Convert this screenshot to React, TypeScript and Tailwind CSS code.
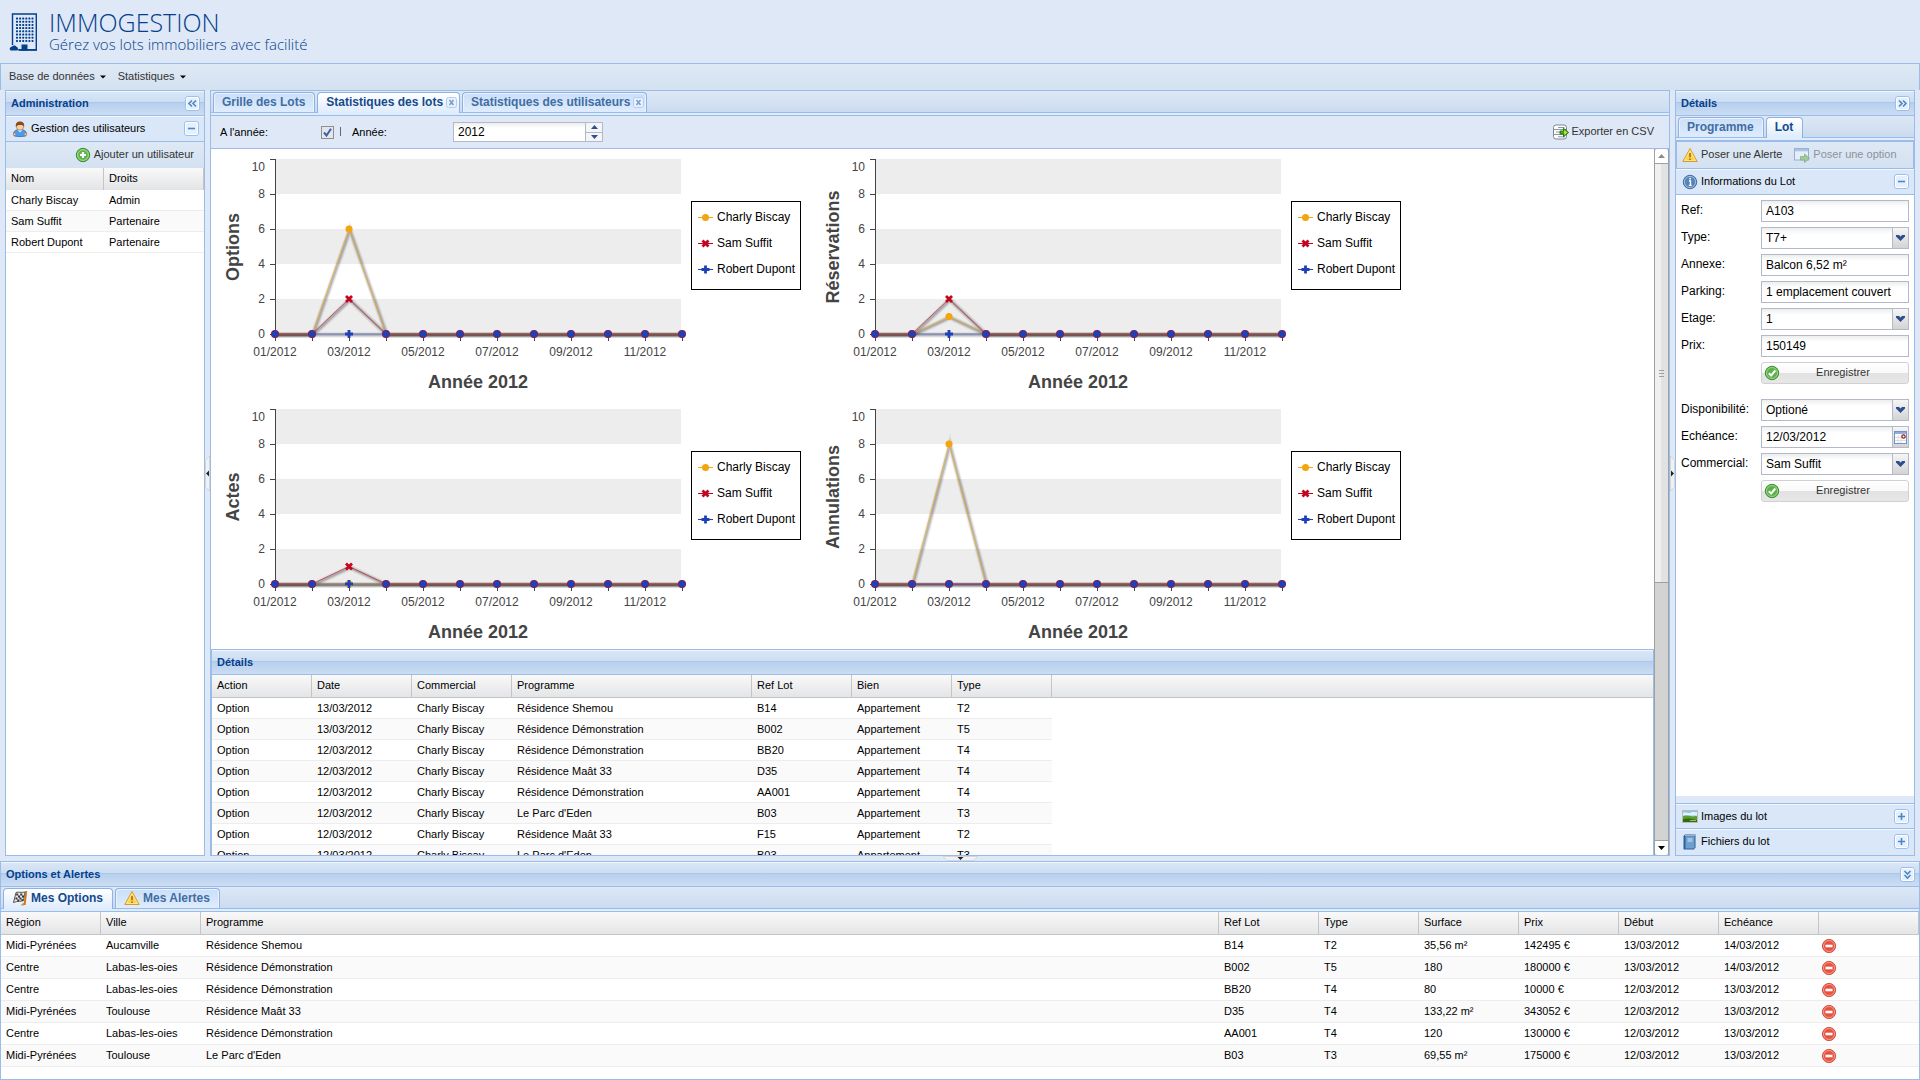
import { useState } from 'react';
import type { ReactNode } from 'react';

const HEADER_BG =
  'bg-[linear-gradient(to_bottom,#dae7f6_0%,#cddef3_45%,#abc7ec_46%,#abc7ec_50%,#b8cfee_51%,#cbddf3_100%)]';
const TOOLBAR_BG = 'bg-gradient-to-b from-[#dfe9f5] to-[#d3e1f1]';
const GRID_HEAD_BG = 'bg-gradient-to-b from-[#f9f9f9] to-[#e3e4e6]';

type ToolType = 'left' | 'right' | 'down' | 'minus' | 'plus';

const toolPaths: Record<ToolType, string> = {
  left: 'M7 4.5L4 7.5L7 10.5M11 4.5L8 7.5L11 10.5',
  right: 'M4 4.5L7 7.5L4 10.5M8 4.5L11 7.5L8 10.5',
  down: 'M4.5 4L7.5 7L10.5 4M4.5 8L7.5 11L10.5 8',
  minus: 'M4 7.5H11',
  plus: 'M4 7.5H11M7.5 4V11',
};

/** パネル右上のツールボタン */
function Tool({ type, label }: { type: ToolType; label: string }) {
  return (
    <button type="button" aria-label={label} className="ml-auto block size-[15px] shrink-0">
      <svg width="15" height="15" viewBox="0 0 15 15">
        <rect x="0.5" y="0.5" width="14" height="14" rx="2.5" fill="#e4f0fd" stroke="#9cbfee" />
        <rect x="1.5" y="1.5" width="12" height="12" rx="1.5" fill="none" stroke="#fff" />
        <path d={toolPaths[type]} fill="none" stroke="#4d86c2" strokeWidth="1.6" />
      </svg>
    </button>
  );
}

function UserIcon() {
  return (
    <svg width="16" height="16" viewBox="0 0 16 16">
      <path d="M1.5 13.5C1.5 10 4 8.5 8 8.5s6.500 1.500 6.500 5C14.500 15.200 12 15.500 8 15.500s-6.500-.3-6.500-2z" fill="#4d9be8" stroke="#2a66b4" strokeWidth=".8" />
      <path d="M5.500 9L8 11.500L10.500 9z" fill="#d8ecff" />
      <circle cx="2.500" cy="13.300" r="1.300" fill="#f2c08c" stroke="#b0703c" strokeWidth=".5" />
      <circle cx="13.500" cy="13.300" r="1.300" fill="#f2c08c" stroke="#b0703c" strokeWidth=".5" />
      <circle cx="8" cy="5.500" r="3.700" fill="#f6cfa2" stroke="#a8683a" strokeWidth=".6" />
      <path d="M4 6C3 2 5.500.5 8 .5S13 2 12 6C11.500 4.500 10.500 4 8.500 4S5 4.300 4 6z" fill="#8a4a1c" />
    </svg>
  );
}

function AddIcon() {
  return (
    <svg width="16" height="16" viewBox="0 0 16 16">
      <circle cx="8" cy="8" r="6.700" fill="#5fb54a" stroke="#3c8a32" />
      <circle cx="8" cy="8" r="5.400" fill="none" stroke="#b4e0a4" strokeWidth=".9" />
      <path d="M8 5V11M5 8H11" stroke="#fff" strokeWidth="2.200" />
    </svg>
  );
}

function AcceptIcon() {
  return (
    <svg width="16" height="16" viewBox="0 0 16 16">
      <circle cx="8" cy="8" r="6.700" fill="#58b244" stroke="#3f8c36" />
      <circle cx="8" cy="8" r="5.500" fill="none" stroke="#a6d998" strokeWidth=".9" />
      <path d="M4.800 8.200L7.200 10.500L11.300 5.500" fill="none" stroke="#fff" strokeWidth="2" />
    </svg>
  );
}

function DeleteIcon() {
  return (
    <svg width="16" height="16" viewBox="0 0 16 16">
      <circle cx="8" cy="8" r="6.600" fill="#e9513f" stroke="#cf5647" />
      <circle cx="8" cy="8" r="5.500" fill="none" stroke="#f5a395" strokeWidth=".9" />
      <rect x="4.500" y="6.700" width="7" height="2.600" fill="#fff" />
    </svg>
  );
}

function WarningIcon() {
  return (
    <svg width="16" height="16" viewBox="0 0 16 16">
      <path d="M8 1.500L15.200 14.500H.8z" fill="#fbd24c" stroke="#dd9a2c" strokeLinejoin="round" />
      <path d="M8 3.700L13.400 13.500H2.600z" fill="none" stroke="#fdeeb0" strokeWidth=".7" />
      <path d="M8 6V10.300M8 11.500V13" stroke="#9c6a12" strokeWidth="1.500" />
    </svg>
  );
}

function OptionIcon() {
  return (
    <svg width="16" height="16" viewBox="0 0 16 16" opacity=".55">
      <rect x=".5" y="1.500" width="14" height="11.500" fill="#f2f6fb" stroke="#5f86bd" />
      <rect x="1" y="2" width="13" height="2.300" fill="#7ea6dc" />
      <path d="M6.500 9.500H10.500V7L15.500 11.300L10.500 15.500V13H6.500z" fill="#72b857" stroke="#3e8730" strokeWidth=".8" />
    </svg>
  );
}

function InfoIcon() {
  return (
    <svg width="16" height="16" viewBox="0 0 16 16">
      <circle cx="8" cy="8" r="6.700" fill="#5484ba" stroke="#3f6ea6" />
      <circle cx="8" cy="8" r="5.600" fill="none" stroke="#a9c6e4" strokeWidth=".9" />
      <path d="M7 7H8.500V11M6.800 11.400H9.600" stroke="#fff" strokeWidth="1.300" fill="none" />
      <rect x="7.300" y="3.900" width="1.600" height="1.600" fill="#fff" />
    </svg>
  );
}

function PictureIcon() {
  return (
    <svg width="16" height="16" viewBox="0 0 16 16">
      <rect x=".5" y="2.500" width="15" height="12" fill="#8fc4ee" stroke="#b5bdb5" />
      <path d="M1 5C4 3.500 6 6 9 4.500S13 5 15 4V7.500H1z" fill="#e2f1fb" />
      <path d="M1 8C4 7 7 7.500 10 8.500L15 8V14H1z" fill="#5f9e26" />
      <path d="M1 11C5 10 9 10.500 15 12V14H1z" fill="#2f6a14" />
      <path d="M8 12.500H14" stroke="#b8d49a" strokeWidth=".8" />
    </svg>
  );
}

function BookIcon() {
  return (
    <svg width="16" height="16" viewBox="0 0 16 16">
      <path d="M1.500 2L3 .5H13.500V13.500L12 15.500H1.500z" fill="#2f5f94" />
      <path d="M3.500 2.500H12.500V14.500H3.500z" fill="#6d9fd0" />
      <path d="M3 1.700H13" stroke="#dce8f3" strokeWidth=".8" />
      <path d="M5.500 5H10.500M5.500 7H10.500" stroke="#d4e6f6" />
    </svg>
  );
}

function ExportIcon() {
  return (
    <svg width="16" height="16" viewBox="0 0 16 16">
      <rect x=".5" y="1" width="13" height="14" rx="2.500" fill="#fff" stroke="#7d8790" />
      <path d="M.5 5.500H13M.5 10.500H13M5 3.500H11.500M3 8H9M5 12.800H12" stroke="#8c979f" />
      <path d="M7 7H10.500V4.300L15.600 8.500L10.500 12.800V10H7z" fill="#3fb21c" stroke="#14610c" strokeWidth=".8" />
      <path d="M11.300 6L14.300 8.500L11.300 11z" fill="#e8e02c" />
    </svg>
  );
}

function FlagIcon() {
  return (
    <svg width="16" height="16" viewBox="0 0 16 16">
      <path d="M4 2.500C6.500 1.500 9 3 13 2L11.500 10.500C9 12 6 10.500 1.500 12.500z" fill="#ececec" stroke="#444" strokeWidth=".9" />
      <path
        d="M4.200 3.500H6.200V5.500H4.200zM8.200 3.500H10.200V5.500H8.200zM6 5.500H8V7.500H6zM10 5.500H12V7.500H10zM3.500 7.500H5.500V9.500H3.500zM7.500 7.500H9.500V9.500H7.500zM5.300 9.500H7.300V11.200H5.300zM9.500 9.300H11.300V11H9.500z"
        fill="#333"
      />
      <path d="M14.200 1L12.600 15" stroke="#c97a1e" strokeWidth="2" />
      <path d="M9 14.800L12 12.500V15.500H9z" fill="#d9942f" />
    </svg>
  );
}

function BuildingLogo() {
  const rows = [0, 1, 2, 3, 4, 5, 6, 7];
  const cols = [0, 1, 2, 3, 4, 5];
  return (
    <svg width="30" height="38" viewBox="0 0 30 38">
      <path d="M3.500 32V1H27.300V37H10" fill="none" stroke="#04408c" strokeWidth="1.400" />
      {rows.map((r) =>
        cols.map((c) => (
          <rect key={`${r}-${c}`} x={7 + c * 3.1} y={4.5 + r * 3.2} width="2" height="2" rx=".6" fill="#04408c" />
        )),
      )}
      <path d="M1.500 37.500C0 36 .5 34 3 33.500C4 32 6.500 32 7.500 33.700C9 34 9.500 36 8.500 37.500z" fill="#04408c" />
      <rect x="12.500" y="31.500" width="6" height="6" fill="#04408c" />
      <path d="M9 36.800H28" stroke="#04408c" strokeWidth="1.400" />
    </svg>
  );
}

/** ヘッダーバー付きタイトル */
function PanelHeader({ title, children }: { title: string; children?: ReactNode }) {
  return (
    <div className={`flex h-[25px] shrink-0 items-center border-b border-[#99bce8] pr-1 pl-[5px] shadow-[inset_0_1px_0_#f0f6fd] ${HEADER_BG}`}>
      <h2 className="text-[11px] leading-4 font-bold text-[#04408c]">{title}</h2>
      {children}
    </div>
  );
}

function AccordionHeader({ icon, title, open }: { icon: ReactNode; title: string; open: boolean }) {
  return (
    <div
      className={`flex shrink-0 items-center gap-[3px] bg-[#d9e7f8] pr-[5px] pl-[6px] text-[11px] shadow-[inset_0_1px_0_#f3f8fd] ${
        open ? 'h-[26px] border-b border-[#99bce8]' : 'h-[25px]'
      }`}
    >
      {icon}
      <span>{title}</span>
      <Tool type={open ? 'minus' : 'plus'} label={title} />
    </div>
  );
}

interface TabDef {
  title: string;
  icon?: ReactNode;
  closable?: boolean;
}

function TabBar({ tabs, initial }: { tabs: TabDef[]; initial: number }) {
  const [active, setActive] = useState(initial);

  return (
    <div className="shrink-0">
      <div role="tablist" className="flex h-[22px] items-end gap-[2px] border-b border-[#99bce8] bg-gradient-to-b from-[#dde8f5] to-[#cbdbef] pl-[2px]">
        {tabs.map((tab, i) => (
          <button
            key={tab.title}
            type="button"
            role="tab"
            aria-selected={i === active}
            onClick={() => setActive(i)}
            className={`flex items-center gap-[3px] rounded-t-[4px] border border-b-0 border-[#8db2e3] pl-2 text-[12px] leading-[18px] font-bold ${
              tab.closable ? 'pr-[2px]' : 'pr-[9px]'
            } ${
              i === active
                ? '-mb-px h-[21px] bg-gradient-to-b from-white to-[#deecfd] pb-[2px] text-[#15498b]'
                : 'h-[20px] bg-gradient-to-b from-[#cbdff7] to-[#deecfd] pb-px text-[#416da3] shadow-[inset_1px_1px_0_#eaf3fd,inset_-1px_0_0_#eaf3fd]'
            }`}
          >
            {tab.icon}
            {tab.title}
            {tab.closable && (
              <svg width="11" height="11" viewBox="0 0 11 11">
                <rect x=".5" y=".5" width="10" height="10" rx="2" fill="#e8f1fb" stroke="#b3cdec" />
                <path d="M3.500 3L7.500 8M7.500 3L3.500 8" stroke="#7ba0ce" strokeWidth="1.600" />
              </svg>
            )}
          </button>
        ))}
      </div>
      <div className="h-[3px] border-b border-[#99bce8] bg-[#deecfd]" />
    </div>
  );
}

interface GridProps {
  columns: string[];
  widths: string[];
  rows: ReactNode[][];
  rowClass: string;
  filler?: boolean;
  headRowClass?: string;
  headClass?: string;
}

/** 一覧テーブル */
function Grid({ columns, widths, rows, rowClass, filler, headRowClass = 'h-[23px]', headClass = 'border-b border-b-[#c5c5c5]' }: GridProps) {
  return (
    <table className="w-full table-fixed border-separate border-spacing-0 text-[11px] leading-[13px]">
      <colgroup>
        {widths.map((w, i) => (
          <col key={i} className={w} />
        ))}
        {filler && <col />}
      </colgroup>
      <thead>
        <tr className={`${headRowClass} ${GRID_HEAD_BG}`}>
          {columns.map((c, i) => (
            <th key={i} scope="col" className={`border-r border-r-[#c5c5c5] px-[5px] pb-[2px] text-left font-normal whitespace-nowrap ${headClass}`}>
              {c}
            </th>
          ))}
          {filler && <td className={headClass} />}
        </tr>
      </thead>
      <tbody>
        {rows.map((row, i) => (
          <tr key={i} className={rowClass}>
            {row.map((cell, j) => (
              <td key={j} className={`border-b border-[#ededed] px-[5px] whitespace-nowrap ${i % 2 ? 'bg-[#fafafa]' : 'bg-white'}`}>
                {cell}
              </td>
            ))}
            {filler && <td />}
          </tr>
        ))}
      </tbody>
    </table>
  );
}

const users = [
  ['Charly Biscay', 'Admin'],
  ['Sam Suffit', 'Partenaire'],
  ['Robert Dupont', 'Partenaire'],
];

const actions = [
  ['Option', '13/03/2012', 'Charly Biscay', 'Résidence Shemou', 'B14', 'Appartement', 'T2'],
  ['Option', '13/03/2012', 'Charly Biscay', 'Résidence Démonstration', 'B002', 'Appartement', 'T5'],
  ['Option', '12/03/2012', 'Charly Biscay', 'Résidence Démonstration', 'BB20', 'Appartement', 'T4'],
  ['Option', '12/03/2012', 'Charly Biscay', 'Résidence Maât 33', 'D35', 'Appartement', 'T4'],
  ['Option', '12/03/2012', 'Charly Biscay', 'Résidence Démonstration', 'AA001', 'Appartement', 'T4'],
  ['Option', '12/03/2012', 'Charly Biscay', "Le Parc d'Eden", 'B03', 'Appartement', 'T3'],
  ['Option', '12/03/2012', 'Charly Biscay', 'Résidence Maât 33', 'F15', 'Appartement', 'T2'],
  ['Option', '12/03/2012', 'Charly Biscay', "Le Parc d'Eden", 'B03', 'Appartement', 'T3'],
];

const options = [
  ['Midi-Pyrénées', 'Aucamville', 'Résidence Shemou', 'B14', 'T2', '35,56 m²', '142495 €', '13/03/2012', '14/03/2012'],
  ['Centre', 'Labas-les-oies', 'Résidence Démonstration', 'B002', 'T5', '180', '180000 €', '13/03/2012', '14/03/2012'],
  ['Centre', 'Labas-les-oies', 'Résidence Démonstration', 'BB20', 'T4', '80', '10000 €', '12/03/2012', '13/03/2012'],
  ['Midi-Pyrénées', 'Toulouse', 'Résidence Maât 33', 'D35', 'T4', '133,22 m²', '343052 €', '12/03/2012', '13/03/2012'],
  ['Centre', 'Labas-les-oies', 'Résidence Démonstration', 'AA001', 'T4', '120', '130000 €', '12/03/2012', '13/03/2012'],
  ['Midi-Pyrénées', 'Toulouse', "Le Parc d'Eden", 'B03', 'T3', '69,55 m²', '175000 €', '12/03/2012', '13/03/2012'],
];

const series = [
  { name: 'Charly Biscay', color: '#f2a50c' },
  { name: 'Sam Suffit', color: '#c2061f' },
  { name: 'Robert Dupont', color: '#1f41b8' },
];

/** 3月の値のみ。他の月はすべて0 */
const charts = [
  { title: 'Options', march: [6, 2, 0] },
  { title: 'Réservations', march: [1, 2, 0] },
  { title: 'Actes', march: [0, 1, 0] },
  { title: 'Annulations', march: [8, 0, 0] },
];

function Marker({ kind, x, y }: { kind: number; x: number; y: number }) {
  if (kind === 0) return <circle cx={x} cy={y} r="3.500" fill={series[0].color} />;
  if (kind === 1) {
    return <path d={`M${x - 3} ${y - 3}L${x + 3} ${y + 3}M${x + 3} ${y - 3}L${x - 3} ${y + 3}`} stroke={series[1].color} strokeWidth="2.800" />;
  }
  return <path d={`M${x - 4} ${y}H${x + 4}M${x} ${y - 4}V${y + 4}`} stroke={series[2].color} strokeWidth="2.800" />;
}

function LineChart({ title, march }: { title: string; march: number[] }) {
  const px = (month: number) => 64 + month * 37;
  const py = (value: number) => 185 - value * 17.5;
  const months = Array.from({ length: 12 }, (_, i) => i);
  const valueAt = (s: number, month: number) => (month === 2 ? march[s] : 0);
  const line = (s: number) => months.map((m) => `${m ? 'L' : 'M'}${px(m)} ${py(valueAt(s, m))}`).join('');
  // 同じ位置に重なる点はまとめて描く
  const overlaps = (s: number, month: number) => s > 0 && valueAt(1, month) === valueAt(2, month);

  return (
    <svg role="img" aria-label={title} width="600" height="250" viewBox="0 0 600 250" className="font-[Liberation_Sans,Arial,sans-serif]">
      {[8, 4, 0].map((v) => (
        <rect key={v} x="65" y={py(v + 2)} width="405" height="35" fill="#ededed" />
      ))}
      <path d="M64.500 10V185.500" stroke="#444" />
      {[0, 2, 4, 6, 8, 10].map((v) => (
        <g key={v}>
          <path d={`M59 ${py(v) + 0.5}H65`} stroke="#444" />
          <text x="54" y={v === 10 ? 22 : py(v) + 4} textAnchor="end" fontSize="12" fill="#444">
            {v}
          </text>
        </g>
      ))}
      {months.map((m) => (
        <path key={m} d={`M${px(m) + 0.5} 185V192`} stroke="#444" />
      ))}
      {months
        .filter((m) => m % 2 === 0)
        .map((m) => (
          <text key={m} x={px(m)} y="207" textAnchor="middle" fontSize="12" fill="#444">
            {`${String(m + 1).padStart(2, '0')}/2012`}
          </text>
        ))}
      {series.map((s, i) => (
        <g key={s.name} fill="none">
          <path d={line(i)} stroke="#000" strokeWidth="6" strokeOpacity=".05" transform="translate(1 1)" />
          <path d={line(i)} stroke="#000" strokeWidth="4" strokeOpacity=".1" transform="translate(1 1)" />
          <path d={line(i)} stroke="#000" strokeWidth="2" strokeOpacity=".15" transform="translate(1 1)" />
        </g>
      ))}
      {[2, 0, 1].map((i) => (
        <path key={i} d={line(i)} fill="none" stroke={series[i].color} strokeOpacity=".6" />
      ))}
      {months.map((m) =>
        series.map((s, i) => !overlaps(i, m) && <Marker key={`${m}-${s.name}`} kind={i} x={px(m)} y={py(valueAt(i, m))} />),
      )}
      {months
        .filter((m) => overlaps(1, m))
        .map((m) => (
          <g key={m}>
            <circle cx={px(m)} cy={py(0)} r="4" fill={series[1].color} />
            <circle cx={px(m)} cy={py(0)} r="3.500" fill={series[2].color} />
          </g>
        ))}
      <text x="267" y="239" textAnchor="middle" fontSize="18" fontWeight="bold" fill="#444">
        Année 2012
      </text>
      <text transform="translate(28 98) rotate(-90)" textAnchor="middle" fontSize="18" fontWeight="bold" fill="#444">
        {title}
      </text>
      <rect x="480.500" y="52.500" width="109" height="88" fill="#fff" stroke="#000" />
      {series.map((s, i) => (
        <g key={s.name}>
          <path d={`M487 ${68.5 + i * 26}H502`} stroke={s.color} />
          <Marker kind={i} x={494.5} y={68.5 + i * 26} />
          <text x="506" y={72 + i * 26} fontSize="12">
            {s.name}
          </text>
        </g>
      ))}
    </svg>
  );
}

const INPUT =
  'block h-[22px] w-full min-w-0 border border-[#b5b8c8] bg-white bg-gradient-to-b from-[#eceeee] from-0% to-white to-30% px-1 text-[12px] text-black outline-none';

function TriggerArrow() {
  return (
    <span className="pointer-events-none absolute top-px right-px bottom-px flex w-4 items-center justify-center border-l border-[#b5b8c8] bg-gradient-to-b from-[#f6f6f6] to-[#d3d3d3]">
      <svg width="9" height="6" viewBox="0 0 9 6">
        <path d="M0 0H3L4.500 1.500L6 0H9V1.500L4.500 6L0 1.500z" fill="#2d4f8f" />
      </svg>
    </span>
  );
}

function Field({ id, label, children }: { id: string; label: string; children: ReactNode }) {
  return (
    <div className="flex h-[22px]">
      <label htmlFor={id} className="w-[80px] shrink-0 pt-[2px] text-[12px] leading-4">
        {label}:
      </label>
      <div className="relative min-w-0 flex-1">{children}</div>
    </div>
  );
}

function TextField({ id, label, value }: { id: string; label: string; value: string }) {
  return (
    <Field id={id} label={label}>
      <input id={id} type="text" defaultValue={value} className={INPUT} />
    </Field>
  );
}

function SelectField({ id, label, choices }: { id: string; label: string; choices: string[] }) {
  return (
    <Field id={id} label={label}>
      <select id={id} className={`appearance-none ${INPUT}`}>
        {choices.map((c) => (
          <option key={c}>{c}</option>
        ))}
      </select>
      <TriggerArrow />
    </Field>
  );
}

function SaveButton() {
  return (
    <button
      type="submit"
      className="ml-[80px] flex h-[22px] items-center rounded-[3px] border border-[#d1d1d1] bg-[linear-gradient(to_bottom,#ffffff,#f9f9f9_48%,#e2e2e2_52%,#e7e7e7)] px-[2px] text-[11px] text-[#333]"
    >
      <AcceptIcon />
      <span className="flex-1 pb-px text-center">Enregistrer</span>
    </button>
  );
}

function AdminPanel() {
  return (
    <aside className="flex w-[200px] shrink-0 flex-col border border-[#99bce8] bg-white">
      <PanelHeader title="Administration">
        <Tool type="left" label="Réduire" />
      </PanelHeader>
      <AccordionHeader icon={<UserIcon />} title="Gestion des utilisateurs" open />
      <div className={`flex h-[26px] shrink-0 items-center justify-end px-[10px] ${TOOLBAR_BG}`}>
        <button type="button" className="flex items-center gap-[3px] pb-px text-[11px] text-[#333]">
          <AddIcon />
          Ajouter un utilisateur
        </button>
      </div>
      <Grid columns={['Nom', 'Droits']} widths={['w-[98px]', '']} rows={users} rowClass="h-[21px]" headRowClass="h-[22px]" headClass="" />
    </aside>
  );
}

function StatsToolbar() {
  const [year, setYear] = useState(2012);

  return (
    <div className="flex h-[33px] shrink-0 items-center border-b border-[#99bce8] bg-[#dfe8f6] pr-[15px] pl-[9px] text-[11px]">
      <label htmlFor="by-year" className="w-[101px] pt-px">
        A l'année:
      </label>
      <span className="relative size-[13px]">
        <input id="by-year" type="checkbox" defaultChecked className="block size-[13px] appearance-none border border-[#8f8f8f] bg-[#e4e6ea]" />
        <svg width="9" height="9" viewBox="0 0 9 9" className="pointer-events-none absolute top-[2px] left-[2px]">
          <path d="M1 4.500L3.500 7.500L8 .8" fill="none" stroke="#3f5fa8" strokeWidth="2" />
        </svg>
      </span>
      <span className="mx-[6px] mb-[2px] h-[9px] w-px bg-[#666]" />
      <label htmlFor="year" className="ml-[5px] w-[101px]">
        Année:
      </label>
      <div className="flex h-5 w-[150px]">
        <input
          id="year"
          type="text"
          value={year}
          onChange={(e) => setYear(Number(e.target.value) || 0)}
          className="h-5 w-[133px] border border-[#b5b8c8] bg-white bg-gradient-to-b from-[#eceeee] from-0% to-white to-30% px-1 text-[12px] outline-none"
        />
        <span className="flex w-[17px] flex-col border border-l-0 border-[#b5b8c8] bg-[#f4f5f7]">
          <button type="button" aria-label="Année suivante" onClick={() => setYear(year + 1)} className="flex flex-1 items-center justify-center border-b border-[#b5b8c8]">
            <svg width="7" height="4" viewBox="0 0 7 4">
              <path d="M3.500 0L7 4H0z" fill="#2d4f8f" />
            </svg>
          </button>
          <button type="button" aria-label="Année précédente" onClick={() => setYear(year - 1)} className="flex flex-1 items-center justify-center">
            <svg width="7" height="4" viewBox="0 0 7 4">
              <path d="M3.500 4L7 0H0z" fill="#2d4f8f" />
            </svg>
          </button>
        </span>
      </div>
      <button type="button" className="ml-auto flex items-center gap-[2px] pb-px text-[#333]">
        <ExportIcon />
        Exporter en CSV
      </button>
    </div>
  );
}

function ScrollBar() {
  return (
    <div className="flex w-[15px] shrink-0 flex-col border-x border-[#a0a0a0] bg-[#d3d3d3]">
      <button type="button" aria-label="Défiler vers le haut" className="flex h-[15px] items-center justify-center rounded-t-[3px] border-b border-[#a0a0a0] bg-white">
        <svg width="7" height="4" viewBox="0 0 7 4">
          <path d="M3.500 0L7 4H0z" fill="#8c8c8c" />
        </svg>
      </button>
      <div className="flex h-[419px] flex-col items-center justify-center gap-[2px] border-b border-[#a0a0a0] bg-gradient-to-r from-[#f0f0f0] from-50% to-[#e2e2e2] to-50%">
        <span className="h-px w-[5px] bg-[#a0a0a0]" />
        <span className="h-px w-[5px] bg-[#a0a0a0]" />
        <span className="h-px w-[5px] bg-[#a0a0a0]" />
      </div>
      <div className="flex-1" />
      <button type="button" aria-label="Défiler vers le bas" className="flex h-[15px] items-center justify-center rounded-b-[3px] border-t border-[#a0a0a0] bg-white">
        <svg width="7" height="4" viewBox="0 0 7 4">
          <path d="M3.500 4L7 0H0z" fill="#000" />
        </svg>
      </button>
    </div>
  );
}

function CenterPanel() {
  return (
    <main className="flex min-w-0 flex-1 flex-col border border-[#99bce8] bg-white">
      <TabBar
        initial={1}
        tabs={[{ title: 'Grille des Lots' }, { title: 'Statistiques des lots', closable: true }, { title: 'Statistiques des utilisateurs', closable: true }]}
      />
      <StatsToolbar />
      <div className="flex min-h-0 flex-1">
        <div className="min-w-0 flex-1 overflow-hidden">
          <div className="grid w-[1200px] grid-cols-2">
            {charts.map((c) => (
              <LineChart key={c.title} {...c} />
            ))}
          </div>
          <section className="border border-[#99bce8]">
            <PanelHeader title="Détails" />
            <Grid
              columns={['Action', 'Date', 'Commercial', 'Programme', 'Ref Lot', 'Bien', 'Type']}
              widths={['w-[100px]', 'w-[100px]', 'w-[100px]', 'w-[240px]', 'w-[100px]', 'w-[100px]', 'w-[100px]']}
              rows={actions}
              rowClass="h-[21px]"
              filler
            />
          </section>
        </div>
        <ScrollBar />
      </div>
    </main>
  );
}

function LotPanel() {
  return (
    <aside className="flex w-[240px] shrink-0 flex-col border border-[#99bce8] bg-[#dfe8f6]">
      <PanelHeader title="Détails">
        <Tool type="right" label="Réduire" />
      </PanelHeader>
      <TabBar initial={1} tabs={[{ title: 'Programme' }, { title: 'Lot' }]} />
      <div className={`flex h-[28px] shrink-0 items-center gap-3 border border-[#99bce8] px-[5px] pb-px text-[11px] ${TOOLBAR_BG}`}>
        <button type="button" className="flex items-center gap-[3px] text-[#333]">
          <WarningIcon />
          Poser une Alerte
        </button>
        <button type="button" disabled className="flex items-center gap-[3px] text-[#8c9299]">
          <OptionIcon />
          Poser une option
        </button>
      </div>
      <AccordionHeader icon={<InfoIcon />} title="Informations du Lot" open />
      <div className="flex flex-1 flex-col bg-white p-[5px]">
        <form className="flex flex-col gap-[5px]" onSubmit={(e) => e.preventDefault()}>
          <TextField id="ref" label="Ref" value="A103" />
          <SelectField id="type" label="Type" choices={['T7+', 'T5', 'T4', 'T3', 'T2']} />
          <TextField id="annexe" label="Annexe" value="Balcon 6,52 m²" />
          <TextField id="parking" label="Parking" value="1 emplacement couvert" />
          <SelectField id="etage" label="Etage" choices={['1', '2', '3']} />
          <TextField id="prix" label="Prix" value="150149" />
          <SaveButton />
        </form>
        <form className="mt-[15px] flex flex-col gap-[5px]" onSubmit={(e) => e.preventDefault()}>
          <SelectField id="dispo" label="Disponibilité" choices={['Optioné', 'Disponible', 'Réservé']} />
          <Field id="echeance" label="Echéance">
            <input id="echeance" type="text" defaultValue="12/03/2012" className={INPUT} />
            <button
              type="button"
              aria-label="Choisir une date"
              className="absolute top-px right-px bottom-px flex w-4 items-center justify-center border-l border-[#b5b8c8] bg-gradient-to-b from-[#f6f6f6] to-[#d3d3d3]"
            >
              <svg width="13" height="13" viewBox="0 0 13 13">
                <rect x=".5" y=".5" width="12" height="12" fill="#fff" stroke="#6f93c4" />
                <path d="M1 2H12" stroke="#8fb0dc" strokeWidth="2" />
                <path d="M4 4V12M7 4V12M1 6.500H12M1 9.500H12" stroke="#ddd" />
                <circle cx="9.500" cy="5.500" r="1.700" fill="#fff" stroke="#a01818" strokeWidth="1.200" />
              </svg>
            </button>
          </Field>
          <SelectField id="commercial" label="Commercial" choices={['Sam Suffit', 'Charly Biscay', 'Robert Dupont']} />
          <SaveButton />
        </form>
      </div>
      <div className="mt-[7px] divide-y divide-[#99bce8] border-t border-[#99bce8] bg-[#d9e7f8] pb-px">
        <AccordionHeader icon={<PictureIcon />} title="Images du lot" open={false} />
        <AccordionHeader icon={<BookIcon />} title="Fichiers du lot" open={false} />
      </div>
    </aside>
  );
}

/** パネル間の分割バー */
function Splitter({ side }: { side: 'left' | 'right' }) {
  return (
    <div className="flex w-[5px] shrink-0 items-center">
      <svg width="5" height="35" viewBox="0 0 5 35">
        <path d="M4.500 0V35L.5 31V4z" fill="#eef1f5" stroke="#ccc" strokeWidth=".7" transform={side === 'right' ? 'translate(5 0) scale(-1 1)' : undefined} />
        <path d={side === 'left' ? 'M4 14.500L1 17.500L4 20.500z' : 'M1 14.500L4 17.500L1 20.500z'} fill="#222" />
      </svg>
    </div>
  );
}

function OptionsPanel() {
  const rows = options.map((o) => [
    ...o,
    <button key="delete" type="button" aria-label="Supprimer" className="-ml-[3px] block">
      <DeleteIcon />
    </button>,
  ]);

  return (
    <section className="flex shrink-0 flex-col border border-[#99bce8] bg-white pb-3">
      <PanelHeader title="Options et Alertes">
        <Tool type="down" label="Réduire" />
      </PanelHeader>
      <TabBar
        initial={0}
        tabs={[
          { title: 'Mes Options', icon: <FlagIcon /> },
          { title: 'Mes Alertes', icon: <WarningIcon /> },
        ]}
      />
      <Grid
        columns={['Région', 'Ville', 'Programme', 'Ref Lot', 'Type', 'Surface', 'Prix', 'Début', 'Echéance', '']}
        widths={['w-[100px]', 'w-[100px]', '', 'w-[100px]', 'w-[100px]', 'w-[100px]', 'w-[100px]', 'w-[100px]', 'w-[100px]', 'w-[100px]']}
        rows={rows}
        rowClass="h-[22px]"
      />
    </section>
  );
}

export default function App() {
  return (
    <div className="flex h-screen flex-col overflow-hidden bg-[#dfe8f6] font-[Liberation_Sans,Arial,sans-serif] text-black">
      <header className="flex h-[63px] shrink-0 items-start gap-[10px] pt-2 pl-[9px] font-[Open_Sans,Noto_Sans,sans-serif] text-[#04408c]">
        <span className="pt-[5px]">
          <BuildingLogo />
        </span>
        <div>
          <h1 className="text-[25px] leading-7 font-light">IMMOGESTION</h1>
          <p className="text-[15px] leading-4 font-light">Gérez vos lots immobiliers avec facilité</p>
        </div>
      </header>
      <nav className={`flex h-[27px] shrink-0 items-center gap-3 border border-b-0 border-[#99bce8] px-2 pb-[2px] text-[11px] text-[#333] ${TOOLBAR_BG}`}>
        {['Base de données', 'Statistiques'].map((item) => (
          <button key={item} type="button" className="flex items-center gap-[5px]">
            {item}
            <svg width="6" height="4" viewBox="0 0 6 4" className="mt-[2px]">
              <path d="M0 .5H6L3 3.500z" fill="#000" />
            </svg>
          </button>
        ))}
      </nav>
      <div className="flex min-h-0 flex-1 px-[5px]">
        <AdminPanel />
        <Splitter side="left" />
        <CenterPanel />
        <Splitter side="right" />
        <LotPanel />
      </div>
      <div className="flex h-[5px] shrink-0 justify-center">
        <svg width="35" height="5" viewBox="0 0 35 5">
          <path d="M0 .5H35L31 4.500H4z" fill="#eef1f5" stroke="#ccc" strokeWidth=".7" />
          <path d="M14.500 1H20.500L17.500 4z" fill="#222" />
        </svg>
      </div>
      <OptionsPanel />
    </div>
  );
}
